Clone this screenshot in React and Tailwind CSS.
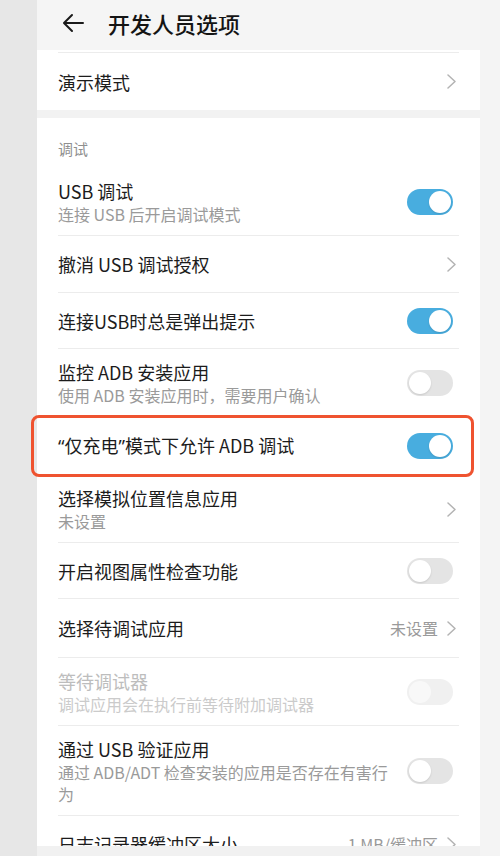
import React from "react";

function Chevron() {
  return (
    <svg width="9" height="15" viewBox="0 0 9 15" className="mr-[3px] shrink-0">
      <path d="M1 1l7 6.5L1 14" fill="none" stroke="#b3b3b3" strokeWidth="1.5" strokeLinecap="round" strokeLinejoin="round" />
    </svg>
  );
}

function Toggle({ on, disabled }) {
  const track = on ? "justify-end bg-[#48addf]" : disabled ? "justify-start bg-[#f0f0f0]" : "justify-start bg-[#e4e4e4]";
  const knob = disabled ? "bg-[#f8f8f8]" : "bg-white shadow-[0_1px_2px_rgba(0,0,0,0.12)]";
  return (
    <span className={`mr-[6px] flex h-[26px] w-[46px] shrink-0 items-center rounded-full p-[2px] ${track}`}>
      <span className={`block h-[22px] w-[22px] rounded-full ${knob}`} />
    </span>
  );
}

function Row({ title, sub, right, disabled, className = "h-[57px]", noBorder }) {
  return (
    <div className={`mx-[21px] flex items-center ${noBorder ? "" : "border-b border-[#ececec]"} ${className}`}>
      <div className="min-w-0 flex-1 pr-[14px]">
        <p className={`text-[18px] leading-[24px] ${disabled ? "text-[#bdbdbd]" : "text-[#1c1c1c]"}`}>{title}</p>
        {sub && (
          <p className={`text-[16px] leading-[22px] ${disabled ? "text-[#cbcbcb]" : "text-[#9a9a9a]"}`}>{sub}</p>
        )}
      </div>
      {right}
    </div>
  );
}

function Q({ children }) {
  return <span className="font-['Noto_Sans',sans-serif]">{children}</span>;
}

export default function App() {
  const two = "pt-[11px] pb-[10px]";
  return (
    <div className="flex h-[856px] w-[500px] overflow-hidden bg-[#f4f4f4] font-['Noto_Sans_CJK_SC','Noto_Sans',sans-serif]">
      <div className="w-[37px] shrink-0 bg-[#e7e7e7]" />

      <div className="flex w-[443px] shrink-0 flex-col bg-[#f5f5f5]">
        {/* Header */}
        <div className="flex h-[50px] shrink-0 items-center pb-[4px] pl-[25px]">
          <svg width="22" height="20" viewBox="0 0 22 20" className="shrink-0">
            <path d="M21 10H2.5M10 2l-8 8 8 8" fill="none" stroke="#1a1a1a" strokeWidth="2" strokeLinecap="round" strokeLinejoin="round" />
          </svg>
          <h1 className="ml-[24px] text-[22px] font-medium leading-[28px] text-[#141414]">开发人员选项</h1>
        </div>

        <div className="min-h-0 flex-1 overflow-x-visible overflow-y-clip">
          {/* First card */}
          <div className="bg-white">
            <div className="mx-[21px] h-[3px] border-b border-[#ececec]" />
            <Row title="演示模式" right={<Chevron />} className="h-[57px]" noBorder />
          </div>

          <div className="h-[8px] bg-[#f2f2f2]" />

          {/* Debug card */}
          <div className="bg-white">
            <div className="flex h-[50px] items-start px-[21px] pt-[21px]">
              <span className="text-[15px] leading-[20px] text-[#8f8f8f]">调试</span>
            </div>
            <Row title="USB 调试" sub="连接 USB 后开启调试模式" right={<Toggle on />} className={two} />
            <Row title="撤消 USB 调试授权" right={<Chevron />} className="h-[57px]" />
            <Row title="连接USB时总是弹出提示" right={<Toggle on />} className="h-[56px]" />
            <Row title="监控 ADB 安装应用" sub="使用 ADB 安装应用时，需要用户确认" right={<Toggle />} className={two} />
            <div className="relative">
              <Row
                title={
                  <>
                    <Q>“</Q>仅充电<Q>”</Q>模式下允许 ADB 调试
                  </>
                }
                right={<Toggle on />}
                className="h-[58px]"
              />
              <span className="pointer-events-none absolute bottom-[-2px] left-[-6px] right-[6px] top-[-2px] rounded-[8px] border-[3px] border-[#ef5330]" />
            </div>
            <Row title="选择模拟位置信息应用" sub="未设置" right={<Chevron />} className={two} />
            <Row title="开启视图属性检查功能" right={<Toggle />} className="h-[56px]" />
            <Row
              title="选择待调试应用"
              right={
                <div className="flex items-center">
                  <span className="mr-[9px] text-[16px] text-[#9a9a9a]">未设置</span>
                  <Chevron />
                </div>
              }
              className="h-[59px]"
            />
            <Row title="等待调试器" sub="调试应用会在执行前等待附加调试器" right={<Toggle disabled />} disabled className={two} />
            <Row title="通过 USB 验证应用" sub="通过 ADB/ADT 检查安装的应用是否存在有害行为" right={<Toggle />} className={two} />
            <Row
              title="日志记录器缓冲区大小"
              right={
                <div className="flex items-center">
                  <span className="mr-[9px] text-[16px] text-[#9a9a9a]">1 MB/缓冲区</span>
                  <Chevron />
                </div>
              }
              className="h-[57px]"
            />
          </div>
        </div>

        <div className="relative h-[10px] shrink-0 bg-[#f1f1f1]" />
      </div>

      <div className="flex-1 bg-[#f4f4f4]" />
    </div>
  );
}
